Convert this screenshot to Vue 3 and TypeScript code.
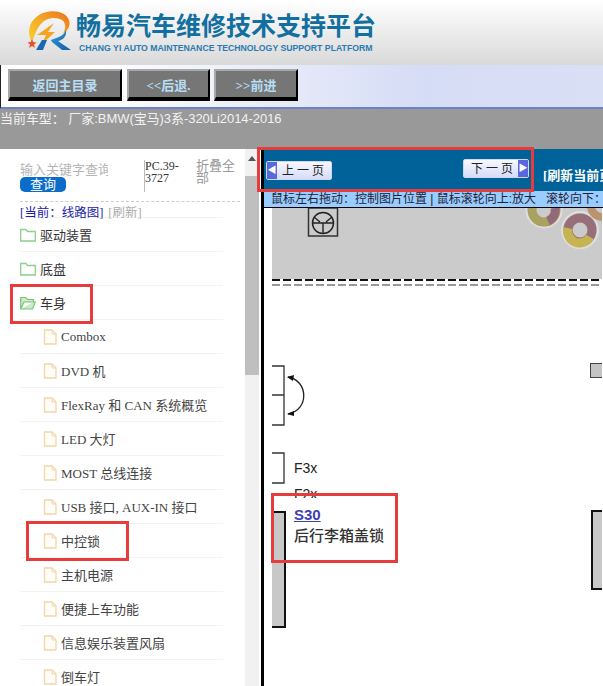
<script setup lang="ts">
interface TreeItem {
  label: string
  kind: 'closed' | 'open' | 'file'
}

const tree: TreeItem[] = [
  { label: '驱动装置', kind: 'closed' },
  { label: '底盘', kind: 'closed' },
  { label: '车身', kind: 'open' },
  { label: 'Combox', kind: 'file' },
  { label: 'DVD 机', kind: 'file' },
  { label: 'FlexRay 和 CAN 系统概览', kind: 'file' },
  { label: 'LED 大灯', kind: 'file' },
  { label: 'MOST 总线连接', kind: 'file' },
  { label: 'USB 接口, AUX-IN 接口', kind: 'file' },
  { label: '中控锁', kind: 'file' },
  { label: '主机电源', kind: 'file' },
  { label: '便捷上车功能', kind: 'file' },
  { label: '信息娱乐装置风扇', kind: 'file' },
  { label: '倒车灯', kind: 'file' }
]

const navButtons = ['返回主目录', '<<后退.', '>>前进']
</script>

<template>
  <div class="page">
    <header class="brand">
      <svg class="logo" viewBox="0 0 46 42" width="46" height="42">
        <defs>
          <linearGradient id="swoosh" x1="0" y1="1" x2="1" y2="0">
            <stop offset="0" stop-color="#f8d030" />
            <stop offset="0.5" stop-color="#f6a925" />
            <stop offset="1" stop-color="#e9701c" />
          </linearGradient>
          <linearGradient id="arm" x1="0" y1="0" x2="1" y2="1">
            <stop offset="0" stop-color="#2f9ad8" />
            <stop offset="1" stop-color="#125ea8" />
          </linearGradient>
        </defs>
        <path d="M7 32C2 24 3 12 14 5 24-1 40 0 44 10 46 16 42 22 38 24 41 18 41 13 37 10 30 6 20 8 15 15 11 20 9 27 7 32Z" fill="url(#swoosh)" />
        <path d="M29 13 12 25H21L17 34 30 22H23Z" fill="#f4a522" />
        <path d="M11 40 17 30H22L18 40Z" fill="#1a68b0" />
        <path d="M26 30 34 27C38 25 40 23 41 20 42 25 39 30 33 31L46 40H37L27 32Z" fill="url(#arm)" />
        <path d="M7 29 8.200 32 11.500 32.500 9 34.500 9.800 38 7 36 4 38 5 34.500 2.500 32.500 5.800 32Z" fill="#e4512a" />
      </svg>
      <div class="brand-text">
        <div class="brand-title">畅易汽车维修技术支持平台</div>
        <div class="brand-sub">CHANG YI AUTO MAINTENANCE TECHNOLOGY SUPPORT PLATFORM</div>
      </div>
    </header>

    <nav class="toolbar">
      <button v-for="label in navButtons" :key="label" class="nav-btn">{{ label }}</button>
    </nav>

    <div class="car-line">当前车型： 厂家:BMW(宝马)3系-320Li2014-2016</div>

    <div class="main">
      <aside class="side">
        <div class="side-body">
          <div class="search">
            <div class="search-left">
              <div class="search-input">输入关键字查询</div>
              <button class="search-btn">查询</button>
            </div>
            <div class="pc-code">PC.39-3727</div>
            <div class="fold">折叠全部</div>
          </div>
          <div class="current">
            <span class="current-name">[当前：线路图]</span>
            <span class="refresh">[刷新]</span>
          </div>
          <ul class="tree">
            <li v-for="item in tree" :key="item.label" class="row" :class="{ child: item.kind === 'file' }">
              <svg v-if="item.kind === 'file'" class="icon" viewBox="0 0 14 16" width="14" height="16">
                <path d="M1.500 1H9L13 5V15H1.500Z" fill="#fffdf8" stroke="#f3d5a8" stroke-width="1.300" />
                <path d="M9 1V5H13" fill="none" stroke="#f3d5a8" />
              </svg>
              <svg v-else-if="item.kind === 'closed'" class="icon" viewBox="0 0 16 14" width="16" height="14">
                <path d="M.700 13V1.500H6L7.500 3.500H15.300V13Z" fill="#fff" stroke="#8fce8f" stroke-width="1.300" />
              </svg>
              <svg v-else class="icon" viewBox="0 0 16 14" width="16" height="14">
                <path d="M.700 13V1.500H6L7.500 3.500H13.500V6H4L.700 13H12.500L15.300 6H13.500" fill="#c9ecc4" stroke="#7cc47c" stroke-width="1.200" />
              </svg>
              <span class="row-label">{{ item.label }}</span>
            </li>
          </ul>
        </div>
        <div class="scrollbar">
          <div class="scroll-up"></div>
          <div class="scroll-thumb"></div>
        </div>
      </aside>

      <section class="viewer">
        <div class="pager">
          <button class="page-btn prev"><span class="arrow">◀</span>上 一 页</button>
          <button class="page-btn next">下 一 页<span class="arrow">▶</span></button>
          <span class="reload">[刷新当前页]</span>
        </div>
        <div class="hint">鼠标左右拖动：控制图片位置 | 鼠标滚轮向上:放大&nbsp;&nbsp;&nbsp;滚轮向下：缩小</div>
        <div class="canvas">
          <svg class="drawing" viewBox="0 0 338 478" width="338" height="478">
            <rect x="8" y="0" width="330" height="71" fill="#cbcbcb" />
            <!-- donuts in the background photo -->
            <g opacity="0.85">
              <circle cx="280" cy="2" r="17.500" fill="none" stroke="#e2e2e2" stroke-width="2" />
              <circle cx="280" cy="2" r="12" fill="none" stroke="#a39a4e" stroke-width="9" />
              <path d="M291 0A12 12 0 0 1 284 13" fill="none" stroke="#8c5a6a" stroke-width="9" />
              <circle cx="316" cy="22" r="18" fill="none" stroke="#e2e2e2" stroke-width="2" />
              <circle cx="316" cy="22" r="12" fill="none" stroke="#8e5f6c" stroke-width="9" />
              <path d="M304 20A12 12 0 0 0 326 29" fill="none" stroke="#c4b03c" stroke-width="9" />
              <circle cx="338" cy="-2" r="11" fill="none" stroke="#b98a5e" stroke-width="8" />
            </g>
            <rect x="44.500" y="0" width="29" height="28" fill="none" stroke="#333" stroke-width="1.500" />
            <circle cx="59" cy="15" r="10.500" fill="none" stroke="#222" stroke-width="1.500" />
            <path d="M49 15H69M59 15V25M50 9 56 14M68 9 62 14" fill="none" stroke="#222" stroke-width="1.400" />
            <line x1="8" y1="72" x2="338" y2="72" stroke="#111" stroke-width="2" stroke-dasharray="8 3" />
            <line x1="8" y1="77" x2="338" y2="77" stroke="#777" stroke-width="1.500" stroke-dasharray="8 3" />
            <path d="M8 158H20V217H8M8 187H20" fill="none" stroke="#333" stroke-width="1.300" />
            <path d="M24 169C44 172 46 202 24 206" fill="none" stroke="#222" stroke-width="1.300" />
            <path d="M23 169 30 167 29 173ZM23 206 30 203 30 208Z" fill="#111" />
            <path d="M8 245H20V275H8" fill="none" stroke="#333" stroke-width="1.300" />
            <path d="M8 304H21V419H8" fill="#c8c8c8" stroke="#111" stroke-width="2" />
            <rect x="326.500" y="155.500" width="14" height="14" fill="#c4c4c4" stroke="#444" />
            <rect x="328" y="303" width="14" height="78" fill="#c8c8c8" stroke="#111" stroke-width="2" />
          </svg>
          <span class="label f3x">F3x</span>
          <span class="label f2x">F2x</span>
          <a class="label s30">S30</a>
          <span class="label lock">后行李箱盖锁</span>
        </div>
      </section>

      <div class="mark mark-pager"></div>
      <div class="mark mark-body"></div>
      <div class="mark mark-lock"></div>
      <div class="mark mark-label"></div>
    </div>
  </div>
</template>

<style scoped>
.page {
  width: 603px;
  height: 686px;
  overflow: hidden;
  font-family: "Liberation Sans", "Noto Sans CJK SC", sans-serif;
  background: #fff;
}

.brand {
  height: 65px;
  display: flex;
  align-items: flex-start;
  padding: 10px 0 0 25px;
  box-sizing: border-box;
  background: linear-gradient(#ffffff, #d9d9d9);
}

.logo {
  flex: none;
  margin-right: 5px;
}

.brand-text {
  margin-top: 2px;
  white-space: nowrap;
}

.brand-title {
  font-size: 25px;
  line-height: 29px;
  font-weight: 700;
  color: #126f9f;
}

.brand-sub {
  margin: 1px 0 0 3px;
  font-size: 8.700px;
  line-height: 12px;
  font-weight: 700;
  color: #2b7bb0;
}

.toolbar {
  height: 44px;
  box-sizing: border-box;
  display: flex;
  gap: 5px;
  padding: 4px 0 0 7px;
  border-left: 1px solid #222;
  border-bottom: 2px solid #6f80c8;
  background: linear-gradient(90deg, #ffffff 15%, #d5dcf5 70%, #d9e0f6);
}

.nav-btn {
  height: 32px;
  padding: 0;
  background: #767676;
  border-style: solid;
  border-width: 2px 2px 4px 2px;
  border-color: #a8a8a8 #000 #000 #a8a8a8;
  color: #b7def5;
  font-family: "Liberation Serif", "Noto Sans CJK SC", serif;
  font-size: 13px;
  font-weight: 700;
}

.nav-btn:nth-child(1) { width: 114px; }
.nav-btn:nth-child(2) { width: 83px; margin-right: -1px; }
.nav-btn:nth-child(3) { width: 84px; }

.car-line {
  height: 40px;
  background: #999;
  color: #f2f2f2;
  font-size: 13px;
  line-height: 19px;
  white-space: nowrap;
  letter-spacing: -0.05px;
}

.main {
  position: relative;
  height: 537px;
  display: flex;
}

.side {
  width: 261px;
  flex: none;
  display: flex;
  overflow: hidden;
  background: #fff;
}

.side-body {
  width: 245px;
  flex: none;
  box-sizing: border-box;
  padding-left: 20px;
  font-family: "Liberation Serif", "Noto Sans CJK SC", serif;
}

.search {
  height: 53px;
  display: flex;
  padding-top: 12px;
  box-sizing: border-box;
  border-bottom: 1px dashed #ccc;
  margin-right: 5px;
}

.search-left {
  width: 124px;
  flex: none;
}

.search-input {
  width: 88px;
  height: 16px;
  overflow: hidden;
  white-space: nowrap;
  font-size: 13px;
  line-height: 17px;
  color: #b5b5b5;
}

.search-btn {
  display: block;
  width: 46px;
  height: 15px;
  padding: 0;
  border: 0;
  border-radius: 5px;
  background: #0b6cc9;
  color: #fff;
  font-family: inherit;
  font-size: 13px;
  line-height: 15px;
}

.pc-code {
  width: 52px;
  height: 32px;
  margin-top: -1px;
  flex: none;
  box-sizing: border-box;
  border-left: 1px solid #bbb;
  font-size: 12px;
  line-height: 12px;
  color: #333;
}

.fold {
  width: 40px;
  margin-top: -1px;
  font-size: 13px;
  line-height: 12px;
  color: #999;
}

.current {
  height: 12px;
  padding-top: 3px;
  font-size: 12.500px;
  line-height: 16px;
  white-space: nowrap;
}

.current-name {
  color: #1a1aa6;
}

.refresh {
  margin-left: 5px;
  color: #aaa;
}

.tree {
  margin: 0;
  padding: 0;
  width: 203px;
  list-style: none;
  border-top: 1px solid #f3f3f3;
}

.row {
  height: 34px;
  box-sizing: border-box;
  display: flex;
  align-items: center;
  gap: 4px;
  border-bottom: 1px solid #f3f3f3;
  font-size: 13px;
  color: #333;
  white-space: nowrap;
}

.row.child {
  padding-left: 23px;
  gap: 4px;
  color: #444;
}

.icon {
  flex: none;
}

.scrollbar {
  width: 14px;
  flex: none;
  background: #f1f1f1;
}

.scroll-up {
  width: 0;
  height: 0;
  margin: 7px auto 0;
  border-left: 4px solid transparent;
  border-right: 4px solid transparent;
  border-bottom: 5px solid #555;
}

.scroll-thumb {
  height: 199px;
  margin-top: 15px;
  background: #bfbfbf;
}

.viewer {
  flex: 1;
  min-width: 0;
  border-left: 3px solid #000;
  display: flex;
  flex-direction: column;
  overflow: hidden;
}

.pager {
  position: relative;
  height: 42px;
  flex: none;
  background: #006298;
}

.page-btn {
  position: absolute;
  height: 19px;
  width: 66px;
  padding: 0;
  border: 1px solid #cfd8f0;
  border-radius: 2px;
  background: linear-gradient(#f8f8ff, #d6dcf8);
  color: #222;
  font-family: "Liberation Serif", "Noto Sans CJK SC", serif;
  font-size: 12px;
  line-height: 16px;
  white-space: nowrap;
}

.prev {
  left: 2px;
  top: 12px;
  padding-left: 8px;
}

.next {
  left: 199px;
  top: 10px;
  padding-right: 8px;
}

.arrow {
  position: absolute;
  top: 0;
  bottom: 0;
  width: 10px;
  background: #5a68dc;
  color: #fff;
  font-size: 9px;
  line-height: 17px;
}

.prev .arrow { left: 0; }
.next .arrow { right: 0; }

.reload {
  position: absolute;
  left: 279px;
  top: 19px;
  color: #fff;
  font-size: 13px;
  font-weight: 700;
  line-height: 16px;
  white-space: nowrap;
  font-family: "Liberation Serif", "Noto Sans CJK SC", serif;
}

.hint {
  height: 17px;
  flex: none;
  box-sizing: border-box;
  padding: 1px 0 0 7px;
  background: #99ccff;
  border-bottom: 1px solid #000;
  color: #223;
  font-size: 12px;
  line-height: 15px;
  white-space: nowrap;
  overflow: hidden;
}

.canvas {
  position: relative;
  flex: 1;
  background: #fff;
}

.drawing {
  position: absolute;
  left: 0;
  top: 0;
  display: block;
}

.label {
  position: absolute;
  left: 30px;
  font-size: 14px;
  line-height: 16px;
  color: #222;
  white-space: nowrap;
}

.f3x { top: 252px; }
.f2x { top: 278px; height: 12px; overflow: hidden; }
.s30 { top: 299px; font-size: 15px; color: #3f3fb0; font-weight: 700; text-decoration: underline; }
.lock { top: 319px; font-size: 15px; line-height: 18px; font-weight: 500; color: #333; }

.mark {
  position: absolute;
  box-sizing: border-box;
  border: 3px solid #e63c3c;
  pointer-events: none;
}

.mark-pager { left: 257px; top: -2px; width: 277px; height: 45px; }
.mark-body { left: 10px; top: 135px; width: 83px; height: 40px; }
.mark-lock { left: 26px; top: 372px; width: 103px; height: 40px; }
.mark-label { left: 271px; top: 344px; width: 127px; height: 70px; }
</style>
